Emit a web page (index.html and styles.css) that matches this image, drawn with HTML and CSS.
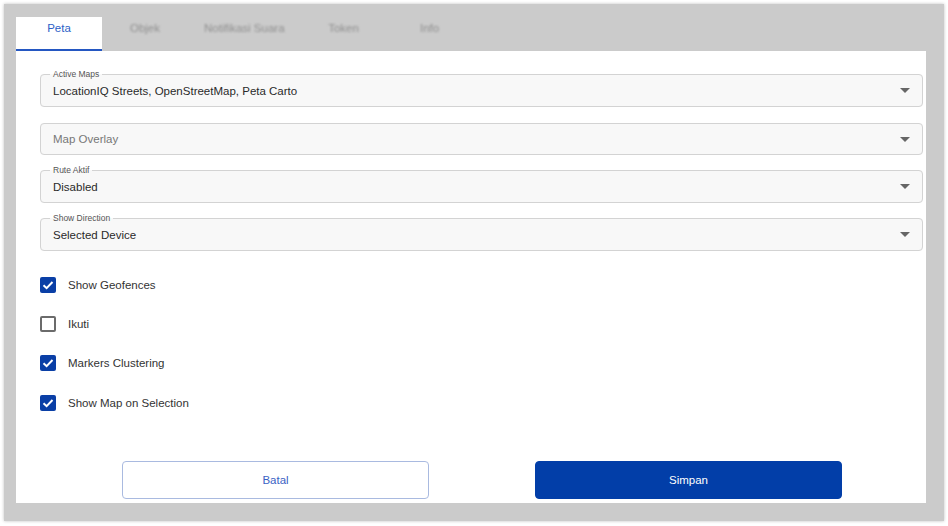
FILE: index.html
```html
<!DOCTYPE html>
<html lang="en">

<head>
    <meta charset="UTF-8">
    <meta name="viewport" content="width=device-width, initial-scale=1.0">
    <title>Pengaturan</title>
    <link rel="stylesheet" href="styles.css">
</head>

<body>
    <div class="frame">
        <ul class="tabs">
            <li class="tab active">Peta</li>
            <li class="tab">Objek</li>
            <li class="tab">Notifikasi Suara</li>
            <li class="tab">Token</li>
            <li class="tab">Info</li>
        </ul>
        <div class="panel">
            <fieldset class="field">
                <legend>Active Maps</legend>
                <div class="value">LocationIQ Streets, OpenStreetMap, Peta Carto<span class="arrow"></span></div>
            </fieldset>
            <fieldset class="field nolabel">
                <div class="value placeholder">Map Overlay<span class="arrow"></span></div>
            </fieldset>
            <fieldset class="field">
                <legend>Rute Aktif</legend>
                <div class="value">Disabled<span class="arrow"></span></div>
            </fieldset>
            <fieldset class="field">
                <legend>Show Direction</legend>
                <div class="value">Selected Device<span class="arrow"></span></div>
            </fieldset>

            <ul class="checks">
                <li class="check on"><span class="box"><svg viewBox="0 0 16 16" width="16" height="16"><polyline points="3.5,8.2 6.6,11.2 12.5,5" /></svg></span>Show Geofences</li>
                <li class="check"><span class="box"></span>Ikuti</li>
                <li class="check on"><span class="box"><svg viewBox="0 0 16 16" width="16" height="16"><polyline points="3.5,8.2 6.6,11.2 12.5,5" /></svg></span>Markers Clustering</li>
                <li class="check on"><span class="box"><svg viewBox="0 0 16 16" width="16" height="16"><polyline points="3.5,8.2 6.6,11.2 12.5,5" /></svg></span>Show Map on Selection</li>
            </ul>

            <div class="buttons">
                <button class="btn btn_cancel">Batal</button>
                <button class="btn btn_save">Simpan</button>
            </div>
        </div>
    </div>
</body>

</html>
```

FILE: styles.css
```css
* {
    box-sizing: border-box;
}

body {
    margin: 0;
    background: #fff;
    font-family: "Liberation Sans", Arial, sans-serif;
    color: #2a2a2a;
}

.frame {
    margin: 4px;
    width: 940px;
    height: 517px;
    background: #cbcbcb;
    padding: 13px 18px 18px 12px;
    display: flex;
    flex-direction: column;
    box-shadow: 0 0 3px rgba(0, 0, 0, 0.25);
}

.tabs {
    list-style: none;
    margin: 0;
    padding: 0;
    display: flex;
    height: 34px;
}

.tab {
    min-width: 86px;
    padding: 4px 16px 0;
    font-size: 11.5px;
    line-height: 14px;
    text-align: center;
    color: #8f8f8f;
    filter: blur(1px);
}

.tab.active {
    background: #fff;
    color: #2d5fc7;
    border-bottom: 2px solid #2457c2;
    filter: none;
}

.panel {
    flex: 1;
    background: #fff;
    padding: 18px 3px 4px 24px;
    display: flex;
    flex-direction: column;
}

.field {
    margin: 0 0 10px;
    padding: 0 12px 4px;
    border: 1px solid #d3d3d3;
    border-radius: 4px;
    background: #f8f8f8;
}

.field legend {
    font-size: 8.5px;
    line-height: 10px;
    color: #555;
    padding: 0 3px;
    margin-left: -3px;
}

.field.nolabel {
    margin-top: 6px;
    padding-top: 0;
    padding-bottom: 0;
}

.value {
    display: flex;
    align-items: center;
    justify-content: space-between;
    height: 23px;
    font-size: 11.5px;
}

.nolabel .value {
    height: 30px;
}

.placeholder {
    color: #777;
}

.arrow {
    width: 0;
    height: 0;
    border-left: 5px solid transparent;
    border-right: 5px solid transparent;
    border-top: 5px solid #666;
}

.checks {
    list-style: none;
    margin: 4px 0 0;
    padding: 0;
}

.check {
    display: flex;
    align-items: center;
    height: 39.3px;
    font-size: 11.5px;
    color: #333;
}

.box {
    width: 16px;
    height: 16px;
    margin-right: 12px;
    border: 2px solid #6b6b6b;
    border-radius: 2px;
    background: #fff;
}

.check.on .box {
    border: 0;
    background: #0a3fa6;
}

.box svg {
    display: block;
    fill: none;
    stroke: #fff;
    stroke-width: 2;
}

.buttons {
    margin-top: auto;
    display: flex;
    gap: 106px;
    padding-left: 82px;
}

.btn {
    width: 307px;
    height: 38px;
    border-radius: 4px;
    font-family: inherit;
    font-size: 11.5px;
}

.btn_cancel {
    background: #fff;
    border: 1px solid #a9bae0;
    color: #3b62c4;
}

.btn_save {
    background: #023ea8;
    border: 1px solid #023ea8;
    color: #fff;
}
```
